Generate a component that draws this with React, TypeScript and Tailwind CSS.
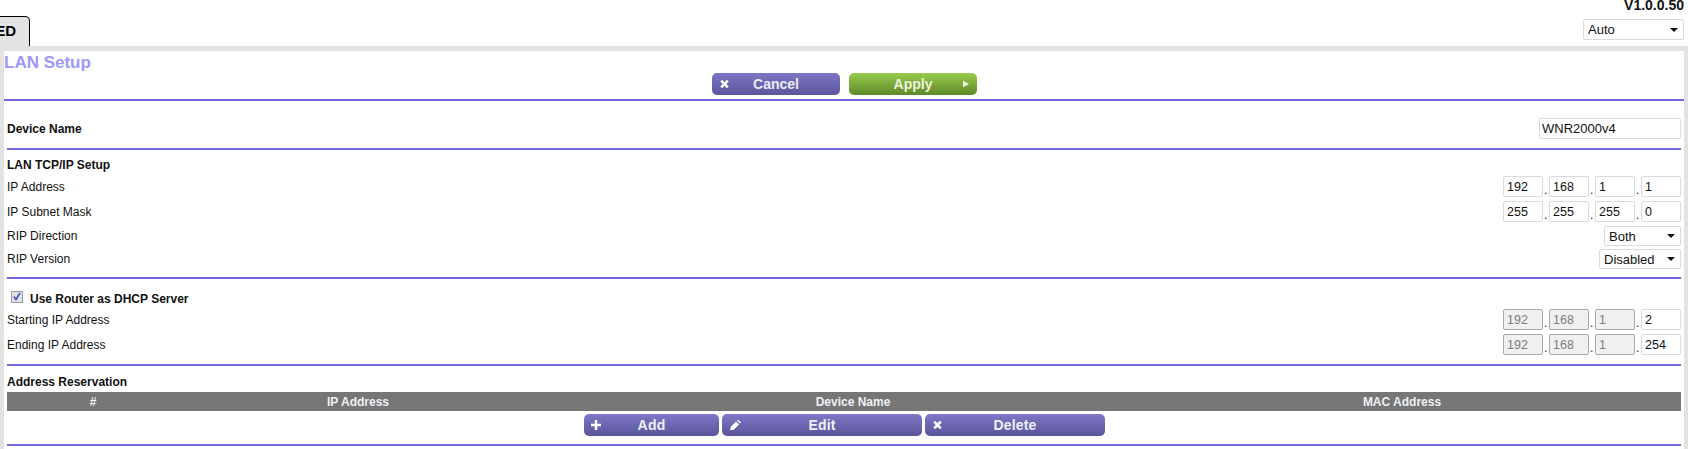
import { ReactNode } from "react"

const Rule = ({ inset = true }: { inset?: boolean }) => (
  <div className={`h-[2px] shrink-0 bg-[#7068dc] ${inset ? "mx-[3px]" : ""}`} />
)

const Arrow = () => (
  <svg width="8" height="4" viewBox="0 0 8 4" className="pointer-events-none absolute right-[6px] top-1/2 -translate-y-[2px]">
    <path d="M0 0h8L4 4z" fill="#111" />
  </svg>
)

const Select = ({ value, className }: { value: string; className: string }) => (
  <div className={`relative ${className}`}>
    <select
      defaultValue={value}
      className="block h-full w-full appearance-none rounded-[2px] border border-[#d5dbe3] bg-white pl-[4px] text-[13px] text-[#111]"
    >
      <option>{value}</option>
    </select>
    <Arrow />
  </div>
)

const Octet = ({ value, disabled }: { value: string; disabled?: boolean }) => (
  <input
    readOnly
    value={value}
    className={
      disabled
        ? "h-[21px] w-[40px] rounded-[2px] border border-[#a9a9a9] bg-[#f0f0f0] pl-[3px] text-[12.5px] text-[#7d7d7d]"
        : "h-[21px] w-[40px] rounded-[2px] border border-[#d5dbe3] bg-white pl-[3px] text-[12.5px] text-[#111]"
    }
  />
)

const IpFields = ({ values, disabled = 0 }: { values: string[]; disabled?: number }) => (
  <div className="flex">
    {values.map((v, i) => (
      <div key={i} className="flex items-end">
        {i > 0 && <span className="w-[6px] pb-[1px] pl-[1px] text-[12px] leading-[12px] text-[#222]">.</span>}
        <Octet value={v} disabled={i < disabled} />
      </div>
    ))}
  </div>
)

const Row = ({ label, children, className }: { label: string; children: ReactNode; className: string }) => (
  <div className={`flex items-center justify-between ${className}`}>
    <span className="text-[12px] text-[#111]">{label}</span>
    {children}
  </div>
)

const PurpleBtn = ({ icon, label, className }: { icon: ReactNode; label: string; className: string }) => (
  <button className={`relative flex h-[22px] items-center justify-center rounded-[5px] bg-gradient-to-b from-[#7f78c6] to-[#5a549c] text-[14px] font-bold tracking-[0.2px] text-[#eef0f8] ${className}`}>
    <span className="absolute left-[8px] top-1/2 flex -translate-y-1/2">{icon}</span>
    {label}
  </button>
)

const XIcon = () => (
  <svg width="9" height="9" viewBox="0 0 9 9">
    <path d="M1.2 1.2l6.6 6.6M7.8 1.2l-6.6 6.6" stroke="#fff" strokeWidth="2.6" />
  </svg>
)

const PlusIcon = () => (
  <svg width="10" height="10" viewBox="0 0 10 10" className="-ml-[1px]">
    <path d="M5 0v10M0 5h10" stroke="#fff" strokeWidth="2.4" />
  </svg>
)

const PencilIcon = () => (
  <svg width="11" height="11" viewBox="0 0 11 11">
    <path d="M0 11l1-4 5-5 3 3-5 5zM7 1l1-1 3 3-1 1z" fill="#fff" />
  </svg>
)

export default function App() {
  return (
    <div className="h-[449px] w-[1688px] overflow-hidden bg-white font-['Liberation_Sans',Arial,sans-serif]">
      {/* top strip */}
      <div className="relative flex h-[46px] justify-end">
        <div className="absolute bottom-0 left-[-10px] flex h-[30px] w-[40px] items-center justify-end rounded-tr-[5px] border border-b-0 border-black bg-[#e3e3e3] pr-[13px] pb-[1px] text-[15px] font-bold text-black">
          ED
        </div>
        <div className="flex flex-col items-end pr-[4px]">
          <span className="h-[19px] text-[14px] leading-[10px] font-bold text-[#111]">V1.0.0.50</span>
          <Select value="Auto" className="h-[21px] w-[101px]" />
        </div>
      </div>

      <div className="h-[403px] border-x-4 border-t-[5px] border-[#e3e3e3]">
        <div className="flex h-[48px] flex-col">
          <h1 className="h-[22px] pt-[1px] text-[17px] leading-[22px] font-bold text-[#9d97fb]">LAN Setup</h1>
          <div className="flex gap-[9px] pl-[708px]">
            <button className="relative flex h-[22px] w-[128px] items-center justify-center rounded-[5px] bg-gradient-to-b from-[#7d76c4] to-[#5c569e] text-[14px] font-bold text-[#e9ebf5]">
              <span className="absolute left-[8px] top-1/2 flex -translate-y-1/2"><XIcon /></span>
              Cancel
            </button>
            <button className="relative flex h-[22px] w-[128px] items-center justify-center rounded-[5px] bg-gradient-to-b from-[#98cc4c] to-[#5f8a2a] text-[14px] font-bold text-[#eef2dc]">
              Apply
              <svg width="6" height="7" viewBox="0 0 6 7" className="absolute right-[8px] top-1/2 -translate-y-1/2">
                <path d="M0 0l6 3.5L0 7z" fill="#eef2dc" />
              </svg>
            </button>
          </div>
        </div>
        <Rule inset={false} />

        <div className="flex h-[47px] items-center justify-between px-[3px] pt-[8px]">
          <span className="text-[12px] font-bold text-[#111]">Device Name</span>
          <input
            readOnly
            value="WNR2000v4"
            className="h-[21px] w-[142px] rounded-[2px] border border-[#d5dbe3] bg-white pl-[2px] text-[13px] text-[#111]"
          />
        </div>
        <Rule />

        <div className="flex h-[127px] flex-col px-[3px]">
          <div className="h-[26px] pt-[8px] text-[12px] leading-[14px] font-bold text-[#111]">LAN TCP/IP Setup</div>
          <Row label="IP Address" className="h-[21px]"><IpFields values={["192", "168", "1", "1"]} /></Row>
          <Row label="IP Subnet Mask" className="mt-[4px] h-[21px]"><IpFields values={["255", "255", "255", "0"]} /></Row>
          <Row label="RIP Direction" className="mt-[4px] h-[20px]"><Select value="Both" className="h-[20px] w-[77px]" /></Row>
          <Row label="RIP Version" className="mt-[3px] h-[20px]"><Select value="Disabled" className="h-[20px] w-[82px]" /></Row>
        </div>
        <Rule />

        <div className="flex h-[85px] flex-col px-[3px]">
          <label className="flex h-[30px] items-center gap-[7px] pl-[4px] pt-[10px] text-[12px] font-bold text-[#111]">
            <span className="relative -mt-[4px] flex h-[12px] w-[12px]">
              <input type="checkbox" defaultChecked className="m-0 h-[12px] w-[12px] appearance-none border border-[#9a9aa6] bg-[#dfe2ea]" />
              <svg width="10" height="10" viewBox="0 0 10 10" className="pointer-events-none absolute left-[1px] top-[1px]">
                <path d="M2 4.5l2 3 4-6.5" fill="none" stroke="#4a4fb0" strokeWidth="1.6" />
              </svg>
            </span>
            Use Router as DHCP Server
          </label>
          <Row label="Starting IP Address" className="h-[21px]"><IpFields values={["192", "168", "1", "2"]} disabled={3} /></Row>
          <Row label="Ending IP Address" className="mt-[4px] h-[21px]"><IpFields values={["192", "168", "1", "254"]} disabled={3} /></Row>
        </div>
        <Rule />

        <div className="h-[78px] px-[3px]">
          <div className="h-[26px] pt-[9px] text-[12px] leading-[14px] font-bold text-[#111]">Address Reservation</div>
          <div className="flex h-[19px] items-center bg-[#767676] text-[12px] font-bold text-[#eef0f4]">
            <span className="w-[172px] text-center">#</span>
            <span className="w-[358px] text-center">IP Address</span>
            <span className="w-[632px] text-center">Device Name</span>
            <span className="w-[466px] text-center">MAC Address</span>
          </div>
          <div className="mt-[3px] flex gap-[3px] pl-[577px]">
            <PurpleBtn icon={<PlusIcon />} label="Add" className="w-[135px]" />
            <PurpleBtn icon={<PencilIcon />} label="Edit" className="w-[200px]" />
            <PurpleBtn icon={<XIcon />} label="Delete" className="w-[180px]" />
          </div>
        </div>
        <Rule />
      </div>
    </div>
  )
}
